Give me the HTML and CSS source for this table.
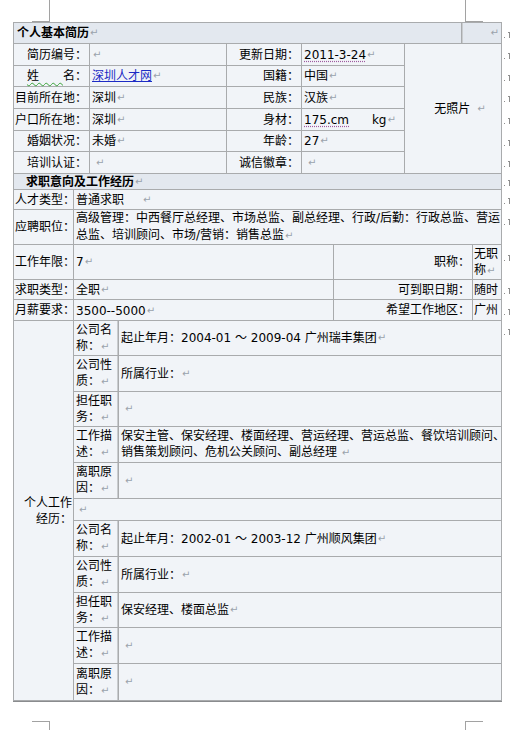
FILE: index.html
```html
<!DOCTYPE html>
<html lang="zh-CN">
<head>
<meta charset="utf-8">
<title>个人基本简历</title>
<link rel="stylesheet" href="styles.css">
</head>
<body>
<div class="page">
  <div class="crop tl"></div>
  <div class="crop tr"></div>
  <div class="crop bl"></div>
  <div class="crop br"></div>

  <div class="sheet">
    <!-- title row -->
    <div class="sect">
      <div class="grid g-title">
        <div class="c hd t1">个人基本简历<i class="p">↵</i></div>
        <div class="c hd r side"><i class="p">↵</i></div>
      </div>
      <div class="marks rows-title"><b class="m"></b></div>
    </div>

    <!-- basic info -->
    <div class="sect">
      <div class="grid g-basic rows-basic">
        <div class="c r">简历编号：</div>
        <div class="c"><i class="p">↵</i></div>
        <div class="c r">更新日期：</div>
        <div class="c"><span class="tag">2011-3-24</span><i class="p">↵</i></div>
        <div class="c photo">无照片<i class="p sp">↵</i></div>

        <div class="c r"><span class="gram">姓　　</span>名：</div>
        <div class="c"><a class="lnk">深圳人才网</a><i class="p">↵</i></div>
        <div class="c r">国籍：</div>
        <div class="c">中国<i class="p">↵</i></div>

        <div class="c r">目前所在地：</div>
        <div class="c">深圳<i class="p">↵</i></div>
        <div class="c r">民族：</div>
        <div class="c">汉族<i class="p">↵</i></div>

        <div class="c r">户口所在地：</div>
        <div class="c">深圳<i class="p">↵</i></div>
        <div class="c r">身材：</div>
        <div class="c"><span class="tag">175.cm</span><span class="pre">      kg</span><i class="p">↵</i></div>

        <div class="c r">婚姻状况：</div>
        <div class="c">未婚<i class="p">↵</i></div>
        <div class="c r">年龄：</div>
        <div class="c">27<i class="p">↵</i></div>

        <div class="c r">培训认证：</div>
        <div class="c"><i class="p ind">↵</i></div>
        <div class="c r">诚信徽章：</div>
        <div class="c"><i class="p ind">↵</i></div>
      </div>
      <div class="marks rows-basic">
        <b class="m"></b><b class="m"></b><b class="m"></b><b class="m"></b><b class="m"></b><b class="m"></b>
      </div>
    </div>

    <!-- job intention -->
    <div class="sect">
      <div class="grid g-job rows-job">
        <div class="c hd t2 span4">求职意向及工作经历<i class="p">↵</i></div>

        <div class="c lb">人才类型：</div>
        <div class="c span3">普通求职&ensp;&ensp;&ensp;<i class="p">↵</i></div>

        <div class="c lb">应聘职位：</div>
        <div class="c span3 multi"><span>高级管理：中西餐厅总经理、市场总监、副总经理、行政/后勤：行政总监、营运<br>总监、培训顾问、市场/营销：销售总监<i class="p">↵</i></span></div>

        <div class="c lb">工作年限：</div>
        <div class="c">7<i class="p">↵</i></div>
        <div class="c r">职称：</div>
        <div class="c nar"><span>无职<br>称<i class="p">↵</i></span></div>

        <div class="c lb">求职类型：</div>
        <div class="c">全职<i class="p">↵</i></div>
        <div class="c r">可到职日期：</div>
        <div class="c nar">随时</div>

        <div class="c lb">月薪要求：</div>
        <div class="c low">3500--5000<i class="p">↵</i></div>
        <div class="c r">希望工作地区：</div>
        <div class="c nar">广州</div>
      </div>
      <div class="marks rows-job">
        <b class="m"></b><b class="m"></b><b class="m top1"></b><b class="m top2"></b><b class="m"></b><b class="m"></b>
      </div>
    </div>

    <!-- work history -->
    <div class="sect">
      <div class="grid g-work rows-work">
        <div class="c r work-label"><span class="ta-r">个人工作<br>经历：</span></div>

        <div class="c k"><span>公司名<br>称：<i class="p">↵</i></span></div>
        <div class="c v">起止年月：2004-01 ～ 2009-04 广州瑞丰集团<i class="p">↵</i></div>
        <div class="c k"><span>公司性<br>质：<i class="p">↵</i></span></div>
        <div class="c v">所属行业：<i class="p">↵</i></div>
        <div class="c k"><span>担任职<br>务：<i class="p">↵</i></span></div>
        <div class="c v"><i class="p ind">↵</i></div>
        <div class="c k"><span>工作描<br>述：<i class="p">↵</i></span></div>
        <div class="c v"><span>保安主管、保安经理、楼面经理、营运经理、营运总监、餐饮培训顾问、<br>销售策划顾问、危机公关顾问、副总经理 <i class="p">↵</i></span></div>
        <div class="c k"><span>离职原<br>因：<i class="p">↵</i></span></div>
        <div class="c v"><i class="p ind">↵</i></div>

        <div class="c span2 blank"><i class="p">↵</i></div>

        <div class="c k"><span>公司名<br>称：<i class="p">↵</i></span></div>
        <div class="c v">起止年月：2002-01 ～ 2003-12 广州顺风集团<i class="p">↵</i></div>
        <div class="c k"><span>公司性<br>质：<i class="p">↵</i></span></div>
        <div class="c v">所属行业：<i class="p">↵</i></div>
        <div class="c k"><span>担任职<br>务：<i class="p">↵</i></span></div>
        <div class="c v">保安经理、楼面总监 <i class="p">↵</i></div>
        <div class="c k"><span>工作描<br>述：<i class="p">↵</i></span></div>
        <div class="c v"><i class="p ind">↵</i></div>
        <div class="c k"><span>离职原<br>因：<i class="p">↵</i></span></div>
        <div class="c v"><i class="p ind">↵</i></div>
      </div>
      <div class="marks rows-work">
        <b class="m top3"></b>
      </div>
    </div>
  </div>
</div>
</body>
</html>
```

FILE: styles.css
```css
* { box-sizing: border-box; margin: 0; padding: 0; }
html, body { background: #ffffff; }
body {
  font-family: "DejaVu Sans", "Noto Sans CJK SC", sans-serif;
  font-size: 12px;
  line-height: 16px;
  color: #000;
}

.page {
  position: relative;
  width: 521px;
  height: 730px;
  padding: 22px 0 0 13px;
}

/* crop marks of the Word page */
.crop {
  position: absolute;
  width: 18px;
  border: 0 solid #a2a2a2;
}
.crop.tl { left: 32px; top: 0; height: 22px; border-right-width: 1px; border-bottom-width: 1px; }
.crop.tr { left: 465px; top: 0; height: 22px; border-left-width: 1px; border-bottom-width: 1px; }
.crop.bl { left: 32px; top: 721px; height: 9px; border-right-width: 1px; border-top-width: 1px; }
.crop.br { left: 465px; top: 721px; height: 9px; border-left-width: 1px; border-top-width: 1px; }

.sheet { width: 502px; }

.sect { display: flex; align-items: stretch; }
.sect + .sect { margin-top: -1px; }

.grid {
  display: grid;
  gap: 1px;
  padding: 1px;
  background: #a9abad;
  width: 489px;
  flex: none;
}

.marks {
  display: grid;
  row-gap: 1px;
  padding: 1px 0;
  width: 12px;
  align-content: start;
}

.m {
  display: block;
  width: 7px;
  height: 6px;
  margin-left: 2px;
  margin-top: 3px;
  align-self: center;
  background:
    linear-gradient(#8e8e8e, #8e8e8e) 0 5px / 1px 1px no-repeat,
    linear-gradient(#8e8e8e, #8e8e8e) 5px 0 / 1px 6px no-repeat,
    linear-gradient(#8e8e8e, #8e8e8e) 4px 0 / 1px 1px no-repeat;
}
.m.top1 { align-self: start; margin-top: 9px; }
.m.top2 { align-self: start; margin-top: 10px; }
.m.top3 { align-self: start; margin-top: 8px; }

/* cells */
.c {
  background: #f1f4f8;
  display: flex;
  align-items: center;
  padding: 0 2px;
  white-space: nowrap;
  min-width: 0;
}
.r { justify-content: flex-end; }
.hd { background: #e3e8ef; font-weight: 700; }
.t1 { padding-left: 3px; }
.t2 { padding-left: 12px; }
.side { box-shadow: inset 1px 0 0 #c9cccf; }

.p {
  font-style: normal;
  font-weight: 400;
  font-family: "DejaVu Sans", sans-serif;
  font-size: 10px;
  color: #9aa2ab;
  margin-left: 1px;
}
.p.ind { margin-left: 4px; }
.p.sp { margin-left: 7px; margin-right: -14px; }

.tag {
  text-decoration: underline dotted #a05aa0;
  text-underline-offset: 2px;
}
.gram {
  text-decoration: underline wavy #3aa23a;
  text-decoration-thickness: 1px;
  text-underline-offset: 2px;
}
.lnk {
  color: #1c2bc4;
  text-decoration: underline;
}
.pre { white-space: pre; }

/* section: title */
.g-title { grid-template-columns: 447px 39px; grid-template-rows: 20px; }
.rows-title { grid-template-rows: 20px; }

/* section: basic */
.g-basic { grid-template-columns: 75px 136px 74px 102px 96px; }
.rows-basic { grid-template-rows: 21px 20px 21px 21px 20px 21px; }
.photo {
  grid-column: 5;
  grid-row: 1 / span 6;
  justify-content: center;
}

/* section: job intention */
.g-job { grid-template-columns: 59px 259px 138px 28px; }
.rows-job { grid-template-rows: 15px 19px 34px 34px 19px 20px; }
.span4 { grid-column: span 4; }
.span3 { grid-column: span 3; }
.span2 { grid-column: span 2; }
.lb { padding: 0 0 0 1px; }
.multi { line-height: 17px; }
.nar { padding: 0 1px; }
.low { padding-top: 2px; }

/* section: work */
.g-work {
  grid-template-columns: 59px 44px 382px;
  box-shadow: 0 1px 0 #8a8c8e;
}
.rows-work { grid-template-rows: 34px 35px 34px 35px 35px 21px 35px 35px 34px 35px 36px; }
.work-label { grid-column: 1; grid-row: 1 / -1; padding-right: 1px; }
.ta-r { text-align: right; }
.k { padding-left: 2px; box-shadow: inset -1px 0 0 #c9cccf; }
.v { padding-left: 2px; }
.blank { padding-left: 4px; }
```
